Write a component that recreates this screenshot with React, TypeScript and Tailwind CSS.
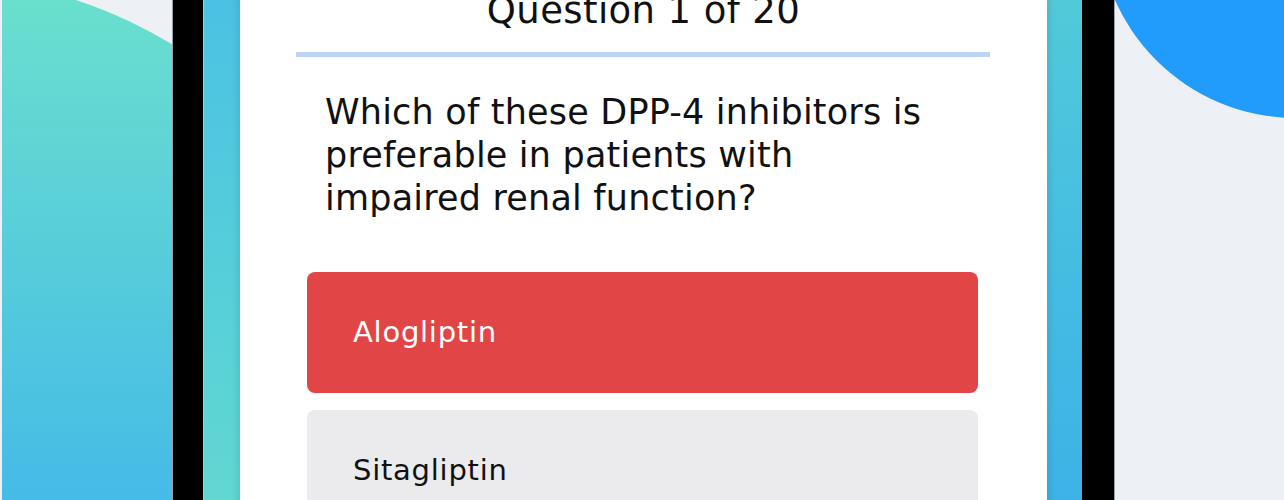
export default function App() {
  return (
    <div className="relative h-[500px] w-[1284px] overflow-hidden bg-[#edf1f6] font-['DejaVu_Sans',sans-serif]">
      {/* background blobs */}
      <div className="absolute inset-y-0 left-[2px] right-0 overflow-hidden">
        <div className="absolute left-[-603px] top-[-24px] h-[948px] w-[1002px] rounded-full bg-[linear-gradient(180deg,#69dfce_3%,#45bbe7_55%,#3aa8f0_100%)]" />
      </div>
      <div className="absolute left-[1098px] top-[-278px] size-[396px] rounded-full bg-[#229cfc]" />

      {/* phone */}
      <div className="relative ml-[172px] mt-[-9px] w-[943px] border-x border-[#9aa3ab] bg-black pl-[30px] pr-[32px]">
        <div className="flex">
          <div className="w-[37px] shrink-0 border-l border-[#7fdcf2] bg-[linear-gradient(180deg,#4bc1e4,#58d0d8_55%,#64dacf)] shadow-[inset_-4px_0_4px_rgba(0,40,60,0.08)]" />
          <div className="w-[807px] shrink-0 bg-white pb-10">
            <h1 className="text-center text-[37px] leading-[40px] tracking-[0.4px] text-[#111]">Question 1 of 20</h1>
            <div className="ml-[56px] mr-[57px] mt-[21px] h-[5px] bg-[#bdd3f8]" />
            <p className="ml-[85px] mt-[34px] w-[610px] text-[35px] leading-[43px] tracking-[0.2px] text-[#111]">
              Which of these DPP-4 inhibitors is preferable in patients with impaired renal function?
            </p>
            <div className="ml-[67px] mr-[69px] mt-[52px] flex flex-col gap-[17px]">
              <div className="flex h-[121px] items-center rounded-lg bg-[#e24545] px-[46px] text-[29px] tracking-[0.75px] text-white">
                Alogliptin
              </div>
              <div className="flex h-[122px] items-center rounded-lg bg-[#ebebed] px-[46px] text-[29px] tracking-[0.75px] text-[#111]">
                Sitagliptin
              </div>
            </div>
          </div>
          <div className="w-[35px] shrink-0 bg-[linear-gradient(180deg,#52cad9,#44bce2_50%,#3aafe8)] shadow-[inset_4px_0_4px_rgba(0,40,60,0.08)]" />
        </div>
      </div>
    </div>
  )
}
